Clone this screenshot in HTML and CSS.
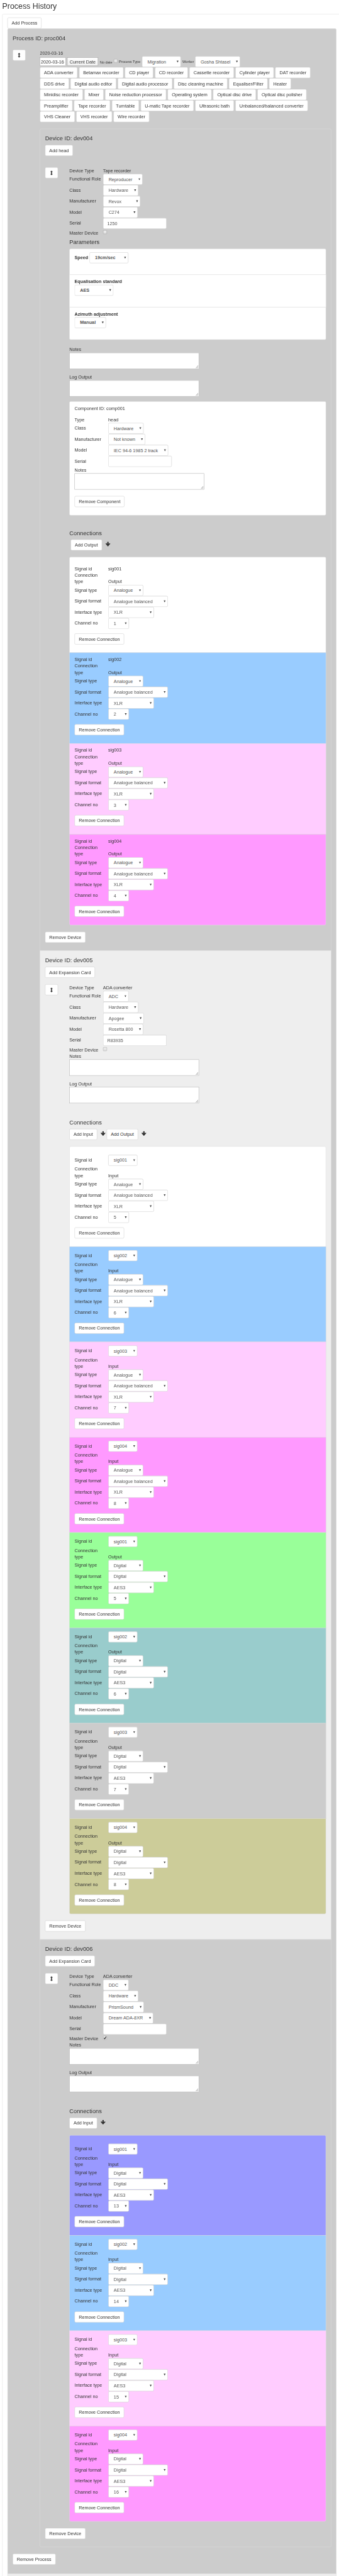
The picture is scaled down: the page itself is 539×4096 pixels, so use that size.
FILE: index.html
```
<!DOCTYPE html>
<html lang="en">
<head>
<meta charset="utf-8">
<title>Process History</title>
<link rel="stylesheet" href="styles.css">
</head>
<body>
<div class="viewport">
  <main class="page">
    <h3 class="title">Process History</h3>
    <div class="panel">
      <button class="btn">Add Process</button>
      <section class="process">
        <h4>Process ID: proc004</h4>
        <div class="process-row">
          <div class="handle-col"><span class="btn handle"><svg class="icon" viewBox="0 0 14 15"><path d="M7 0l4 4.200H8.500v6.600H11L7 15l-4-4.200h2.500V4.200H3z"/></svg></span></div>
          <div class="process-main">
            <div class="line">2020-03-16</div>
            <div class="date-row">
              <span class="date-input">2020-03-16</span>
              <span class="native-btn">Current Date</span>
              <span class="small nodate">No date</span>
              <span class="check date-check"></span>
              <span class="small ptype">Process Type</span>
              <span class="select w119">Migration</span>
              <span class="small worker">Worker</span>
              <span class="select w139">Gosha Shtasel</span>
            </div>
            <div class="device-buttons" id="device-buttons"></div>
            <div class="devices" id="devices"></div>
          </div>
        </div>
        <button class="btn remove-process">Remove Process</button>
      </section>
      <section class="next-process"></section>
    </div>
  </main>
</div>
<script src="app.js"></script>
</body>
</html>
```

FILE: styles.css
```
* { box-sizing: border-box; }
html, body { margin: 0; padding: 0; background: #fff; }
.viewport { width: 539px; height: 4096px; overflow: hidden; }
.page {
  width: 1046px;
  height: 7946px;
  padding: 7px 0 0 7px;
  overflow: hidden;
  transform: scale(0.5153, 0.51548);
  transform-origin: 0 0;
  font: 14px/20px "Liberation Sans", Arial, sans-serif;
  color: #333;
}
h3, h4 { font-weight: 400; margin: 0; }
.title { font-size: 24px; line-height: 26px; margin-bottom: 10px; }
h4 { font-size: 18px; line-height: 19px; margin-bottom: 10px; }
.panel {
  width: 1047px;
  height: 8000px;
  border: 1px solid #ddd;
  border-radius: 4px;
  padding: 10px 15px;
}
.btn {
  display: block;
  height: 34px;
  width: max-content;
  margin: 0;
  padding: 0 12px;
  border: 1px solid #ccc;
  border-radius: 4px;
  background: #fff;
  color: #333;
  font: inherit;
  line-height: 32px;
  white-space: nowrap;
}
.process {
  background: #ccc;
  border: 1px solid #ddd;
  border-radius: 4px 4px 0 0;
  padding: 20px 15px 24px;
  height: 7852px;
}
.next-process {
  height: 60px;
  margin-top: -1px;
  border: 1px solid #ddd;
  background: #eee;
}
.process-row { display: flex; margin-top: 15px; }
.process > h4 { margin-bottom: 0; padding-bottom: 10px; box-sizing: content-box; }
.handle-col { width: 84px; flex: none; }
.handle { width: 40px; display: flex; align-items: center; justify-content: center; }
.icon { width: 14px; height: 15px; fill: #333; display: block; flex: none; }
.process-main { width: 899px; }
.line { height: 20px; }
.date-row { display: flex; height: 34px; align-items: center; white-space: nowrap; }
.date-input {
  width: 80px; height: 26px; border: 1.5px solid #a3a3a3;
  background: #fff; padding-left: 2px; line-height: 24px; margin-right: 4px; margin-top: -1px;
}
.native-btn {
  width: 96px; height: 26px; border: 1.5px solid #a6a6a6; text-align: center;
  background: linear-gradient(#fff, #f0f0f0); line-height: 24px; margin-top: -1px;
}
.small { font-size: 11px; }
.nodate { margin: 1px 0 0 5px; width: 38px; }
.ptype { margin: -1px 0 0 4px; width: 71px; }
.worker { margin: -1px 0 0 5px; width: 39px; }
.check {
  display: block; width: 12px; height: 12px; border: 1px solid #aaa; border-radius: 2px;
  background: linear-gradient(#eee, #ddd); color: #222;
}
.check svg { display: block; width: 10px; height: 10px; }
.date-check { margin: -4px 0 0 5px; }
.select {
  display: block;
  position: relative;
  height: 34px;
  padding-left: 16px;
  border: 1px solid #ccc;
  border-radius: 4px;
  background: #fff;
  box-shadow: inset 0 1px 1px rgba(0, 0, 0, .075);
  color: #555;
  line-height: 32px;
  white-space: nowrap;
  flex: none;
}
.select::after {
  content: "";
  position: absolute;
  right: 6px;
  top: 13px;
  border: 3px solid transparent;
  border-top: 6px solid #444;
  border-bottom: 0;
}
.field::after { display: none; }
.field { padding-left: 12px; }
.w64 { width: 64px; } .w79 { width: 79px; } .w90 { width: 90px; } .w97 { width: 97px; }
.w107 { width: 107px; } .w108 { width: 108px; } .w109 { width: 109px; } .w114 { width: 114px; }
.w115 { width: 115px; } .w119 { width: 120px; } .w120 { width: 120px; } .w122 { width: 122px; }
.w124 { width: 124px; } .w126 { width: 126px; } .w139 { width: 139px; } .w141 { width: 141px; }
.w155 { width: 155px; } .w184 { width: 184px; } .w185 { width: 185px; } .w196 { width: 196px; }
.device-buttons { display: flex; flex-wrap: wrap; column-gap: 4.3px; width: 880px; }
.devices { margin-top: 20px; }
.device {
  border: 1px solid #ddd;
  padding: 20px 15px 24px;
  margin-bottom: -1px;
  background: #ccc;
}
.device.alt { background: #eee; }
.device:first-child { border-radius: 4px 4px 0 0; }
.device:last-child { border-radius: 0 0 4px 4px; margin-bottom: 20px; }
.device-body { display: flex; margin-top: 20px; }
.device-body.far { margin-top: 35px; }
.device-handle { width: 75px; flex: none; }
.device-main { width: 792px; }
.row { display: flex; min-height: 20px; }
.row .label { width: 104px; flex: none; white-space: nowrap; }
.row.control .label { line-height: 32px; }
.row.two { height: 40px; align-items: flex-end; }
.row.two .label { width: 104px; padding-right: 20px; white-space: normal; }
.row.master { height: 22px; padding-top: 2px; }
.row.master .check { margin-top: 2px; }
.params-title { margin-top: 10px; }
.list .item {
  border: 1px solid #ddd;
  margin-bottom: -1px;
  padding: 10px 15px;
  background: #fff;
}
.list .item:first-child { border-radius: 4px 4px 0 0; }
.list .item:last-child { border-radius: 0 0 4px 4px; margin-bottom: 0; }
.list .item:only-child { border-radius: 4px; }
.params { font-weight: 700; margin-bottom: 20px; }
.params .item { height: 101px; }
.params .inline { height: 81px; display: flex; gap: 4px; }
.params .inline .label { line-height: 32px; }
.notes-box {
  display: block; width: 400px; height: 50px; margin-bottom: 15px;
  border: 1px solid #a9a9a9; background: #fff; position: relative;
}
.notes-box svg { position: absolute; right: 1px; bottom: 1px; width: 9px; height: 9px; stroke: #555; stroke-width: 1; }
.component .item { height: 352px; padding-bottom: 24px; }
.component .type { margin-top: 15px; }
.component .notes-box { margin-bottom: 20px; }
.connections-title { margin-top: 50px; }
.component + .connections-title { margin-top: 45px; }
.adders { display: flex; height: 34px; margin-bottom: 20px; }
.adders.indent { padding-left: 4px; }
.adders .icon { width: 16px; height: 15px; margin: 7px 3px 0 10px; }
.conn .item { padding-bottom: 25px; }
.conn .item:first-child { padding-top: 25px; }
.conn .btn { margin-top: 14px; }
.list .white { background: #fff; } .list .blue { background: #9cf; }
.list .pale { background: #fcf; } .list .pink { background: #f9f; }
.list .green { background: #9f9; } .list .teal { background: #9cc; }
.list .grey { background: #ccc; } .list .olive { background: #cc9; }
.list .violet { background: #99f; }
.conn { margin-bottom: 20px; }
```

FILE: app.js
```
const kinds = ['ADA converter', 'Betamax recorder', 'CD player', 'CD recorder', 'Cassette recorder',
  'Cylinder player', 'DAT recorder', 'DDS drive', 'Digital audio editor', 'Digital audio processor',
  'Disc cleaning machine', 'Equaliser/Filter', 'Heater', 'Minidisc recorder', 'Mixer',
  'Noise reduction processor', 'Operating system', 'Optical disc drive', 'Optical disc polisher',
  'Preamplifier', 'Tape recorder', 'Turntable', 'U-matic Tape recorder', 'Ultrasonic bath',
  'Unbalanced/balanced converter', 'VHS Cleaner', 'VHS recorder', 'Wire recorder'];

const button = text => `<button class="btn">${text}</button>`;
const select = (text, w) => `<span class="select w${w}">${text}</span>`;
const field = text => `<span class="select field w196">${text}</span>`;
const row = (label, control) => `<div class="row control"><span class="label">${label}</span>${control}</div>`;
const plain = (label, text, cls = '') => `<div class="row ${cls}"><span class="label">${label}</span><span>${text}</span></div>`;
const area = label => `<div class="line">${label}</div><div class="notes-box"><svg viewBox="0 0 9 9"><path d="M1 9L9 0M5 9l4-4.500"/></svg></div>`;
const handle = '<span class="btn handle"><svg class="icon" viewBox="0 0 14 15"><path d="M7 0l4 4.200H8.500v6.600H11L7 15l-4-4.200h2.500V4.200H3z"/></svg></span>';
const down = '<svg class="icon" viewBox="0 0 16 15"><path d="M5.800 1.200Q5.800 0 8 0t2.200 1.200v5.400l2.600-1.800q1.400-.3 2.700 1.400L8 14.800.500 6.200q1.300-1.700 2.700-1.400l2.600 1.800z"/></svg>';
const tick = '<svg viewBox="0 0 10 10"><path d="M2 5l2.300 3L8.500 1.500" fill="none" stroke="#222" stroke-width="2.200"/></svg>';

function connection([color, sig, dir, digital, channel], picker) {
  return `<div class="item ${color}">
    ${picker ? row('Signal id', select(sig, 90)) : plain('Signal id', sig)}
    ${plain('Connection type', dir, 'two')}
    ${row('Signal type', select(digital ? 'Digital' : 'Analogue', 108))}
    ${row('Signal format', select(digital ? 'Digital' : 'Analogue balanced', 184))}
    ${row('Interface type', select(digital ? 'AES3' : 'XLR', 141))}
    ${row('Channel no', select(channel, 64))}
    ${button('Remove Connection')}
  </div>`;
}

const params = `<h4 class="params-title">Parameters</h4><div class="list params">
  <div class="item inline"><span class="label">Speed</span>${select('19cm/sec', 120)}</div>
  <div class="item"><div class="line">Equalisation standard</div>${select('AES', 120)}</div>
  <div class="item"><div class="line">Azimuth adjustment</div>${select('Manual', 97)}</div></div>`;

const component = `<div class="list component"><div class="item">
  <div class="line">Component ID: comp001</div>
  ${plain('Type', 'head', 'type')}
  ${row('Class', select('Hardware', 109))}
  ${row('Manufacturer', select('Not known', 114))}
  ${row('Model', select('IEC 94-6 1985 2 track', 185))}
  ${row('Serial', field(''))}
  ${area('Notes')}
  ${button('Remove Component')}</div></div>`;

const devices = [
  { id: 'dev004', add: 'Add head', type: 'Tape recorder', first: true,
    fields: [['Reproducer', 122], ['Hardware', 109], ['Revox', 115], ['C274', 107]], serial: '1250',
    adders: ['Add Output'],
    conns: [['white', 'sig001', 'Output', 0, 1], ['blue', 'sig002', 'Output', 0, 2],
      ['pale', 'sig003', 'Output', 0, 3], ['pink', 'sig004', 'Output', 0, 4]] },
  { id: 'dev005', add: 'Add Expansion Card', type: 'ADA converter', alt: true,
    fields: [['ADC', 79], ['Hardware', 109], ['Apogee', 126], ['Rosetta 800', 124]], serial: 'R83935',
    adders: ['Add Input', 'Add Output'],
    conns: [['white', 'sig001', 'Input', 0, 5], ['blue', 'sig002', 'Input', 0, 6],
      ['pale', 'sig003', 'Input', 0, 7], ['pink', 'sig004', 'Input', 0, 8],
      ['green', 'sig001', 'Output', 1, 5], ['teal', 'sig002', 'Output', 1, 6],
      ['grey', 'sig003', 'Output', 1, 7], ['olive', 'sig004', 'Output', 1, 8]] },
  { id: 'dev006', add: 'Add Expansion Card', type: 'ADA converter', master: true,
    fields: [['DDC', 79], ['Hardware', 109], ['PrismSound', 126], ['Dream ADA-8XR', 155]], serial: '',
    adders: ['Add Input'],
    conns: [['violet', 'sig001', 'Input', 1, 13], ['blue', 'sig002', 'Input', 1, 14],
      ['pale', 'sig003', 'Input', 1, 15], ['pink', 'sig004', 'Input', 1, 16]] }
];

const labels = ['Functional Role', 'Class', 'Manufacturer', 'Model'];

document.getElementById('device-buttons').innerHTML = kinds.map(button).join('');
document.getElementById('devices').innerHTML = devices.map(d => `
  <section class="device${d.alt ? ' alt' : ''}">
    <h4>Device ID: ${d.id}</h4>
    ${button(d.add)}
    <div class="device-body${d.first ? ' far' : ''}">
      <div class="device-handle">${handle}</div>
      <div class="device-main">
        ${plain('Device Type', d.type)}
        ${d.fields.map(([text, w], i) => row(labels[i], select(text, w))).join('')}
        ${row('Serial', field(d.serial))}
        <div class="row master"><span class="label">Master Device</span><span class="check">${d.master ? tick : ''}</span></div>
        ${d.first ? params : ''}
        ${area('Notes')}
        ${area('Log Output')}
        ${d.first ? component : ''}
        <h4 class="connections-title">Connections</h4>
        <div class="adders${d.first ? ' indent' : ''}">${d.adders.map(a => button(a) + down).join('')}</div>
        <div class="list conn">${d.conns.map(c => connection(c, !d.first)).join('')}</div>
      </div>
    </div>
    ${button('Remove Device')}
  </section>`).join('');
```
